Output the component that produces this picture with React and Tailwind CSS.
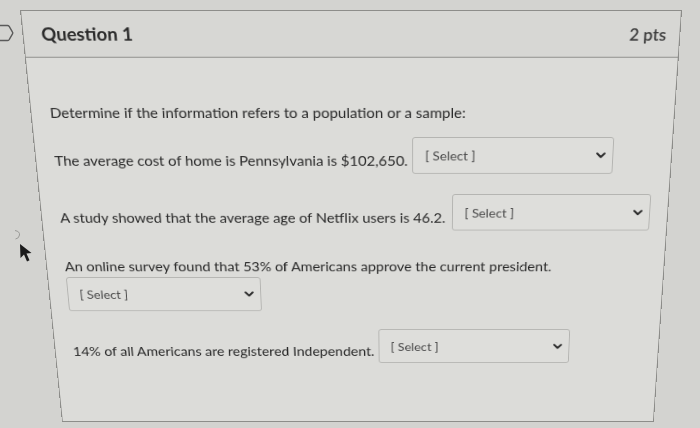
import React from "react";

function Chevron() {
  return (
    <svg width="10" height="7" viewBox="0 0 10 7" className="shrink-0">
      <path d="M1.2 1.3 L5 5.2 L8.8 1.3" fill="none" stroke="#2c2c2c" strokeWidth="2.2" strokeLinecap="round" strokeLinejoin="round" />
    </svg>
  );
}

function Select({ className = "" }) {
  return (
    <div
      className={
        "flex w-[209px] shrink-0 items-center justify-between rounded-[3px] border border-[#b4b4b1] bg-[#dededb] pl-[12px] pr-[7px] " +
        className
      }
    >
      <span className="whitespace-nowrap pt-[1px] text-[13.8px] leading-none text-[#4a4a4a]">[ Select ]</span>
      <Chevron />
    </div>
  );
}

export default function App() {
  return (
    <div
      className="relative h-[428px] w-[700px] overflow-hidden bg-[#d3d3d0] pl-[20px] pt-[10px] text-[#2a2a2a]"
      style={{ fontFamily: "Lato, 'Open Sans', sans-serif" }}
    >
      {/* question nav flag at far left */}
      <svg className="absolute left-0 top-[24px]" width="14" height="18" viewBox="0 0 14 18">
        <path d="M-2 1.5 H7.5 Q8.5 1.5 9.2 2.4 L12.5 8.2 Q13 9 12.5 9.8 L9.2 15.6 Q8.5 16.5 7.5 16.5 H-2" fill="none" stroke="#5a5a5a" strokeWidth="1.4" />
      </svg>
      {/* faint curl mark */}
      <svg className="absolute left-[13px] top-[229px]" width="10" height="12" viewBox="0 0 10 12">
        <path d="M2 1.5 Q7 2.5 6.5 6 Q6 9.5 2.5 10" fill="none" stroke="#9a9a97" strokeWidth="1" />
      </svg>
      {/* mouse cursor */}
      <svg className="absolute left-[19px] top-[243px]" width="14" height="22" viewBox="0 0 14 22">
        <path d="M1 1 L1.5 15 L5 11.5 L8 18.5 L10.5 17.3 L7.5 10.5 L12.5 10 Z" fill="#1b1b1b" />
      </svg>

      <div className="h-[477px] w-[662px] origin-[396px_0px] border border-[#8c8c89] bg-[#dcdcd9] [transform:perspective(1041px)_rotateX(-15deg)]">
        <div className="flex h-[49px] items-center justify-between border-b border-[#8c8c89] bg-[#d7d7d4] pl-[18px] pr-[13px]">
          <span className="pt-[1px] text-[18.6px] font-bold leading-none">Question 1</span>
          <span className="text-[17px] font-semibold leading-none text-[#3a3a3a]">2 pts</span>
        </div>
        <div className="flex flex-col items-start whitespace-nowrap pl-[19px] text-[15.4px] leading-[24px]">
          <p className="mt-[47px]">Determine if the information refers to a population or a sample:</p>
          <div className="mt-[15px] flex items-end">
            <span className="pb-[3px]">The average cost of home is Pennsylvania is $102,650.</span>
            <Select className="ml-[5px] h-[41px]" />
          </div>
          <div className="mt-[23px] flex items-end">
            <span className="pb-[3px]">A study showed that the average age of Netflix users is 46.2.</span>
            <Select className="ml-[7px] h-[42px]" />
          </div>
          <p className="mt-[30px]">An online survey found that 53% of Americans approve the current president.</p>
          <Select className="mt-[1px] h-[41px]" />
          <div className="mt-[22px] flex items-end">
            <span className="pb-[3px]">14% of all Americans are registered Independent.</span>
            <Select className="ml-[5px] h-[42px]" />
          </div>
        </div>
      </div>
    </div>
  );
}
